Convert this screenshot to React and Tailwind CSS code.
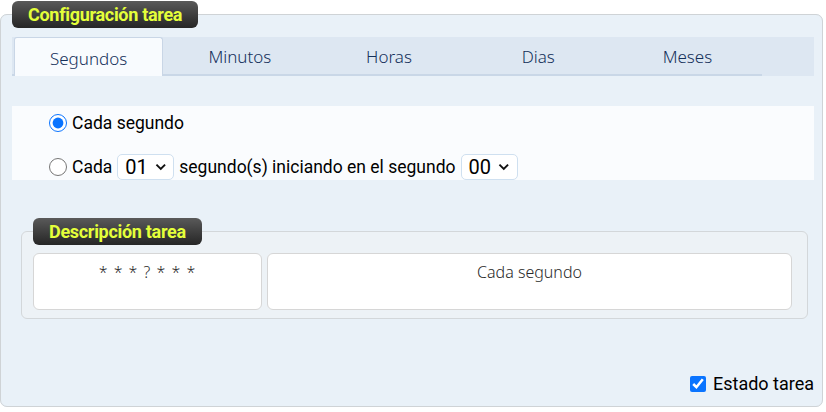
import React, { useState } from "react";

const tabs = ["Segundos", "Minutos", "Horas", "Dias", "Meses"];

const badge =
  "rounded-[6px] bg-gradient-to-b from-[#5a5a5a] to-[#262626] text-[#e4ff3a] font-bold text-[18px] leading-[27px] h-[27px] px-[16px] tracking-[-0.3px]";

const Select = ({ value }) => (
  <span className="inline-flex items-center gap-[7px] h-[26px] w-[57px] px-[7px] rounded-[5px] border border-[#cfe0f0] bg-white text-[20px] text-black">
    {value}
    <svg width="12" height="8" viewBox="0 0 12 8" fill="none">
      <path d="M1.5 1.5 6 6l4.5-4.5" stroke="#111" strokeWidth="2" />
    </svg>
  </span>
);

export default function App() {
  const [tab, setTab] = useState(0);
  const [mode, setMode] = useState("cada");
  const [estado, setEstado] = useState(true);

  return (
    <div className="w-[826px] h-[412px] bg-white pt-[1px]" style={{ fontFamily: "Roboto, sans-serif" }}>
      {/* Configuración tarea */}
      <fieldset className="w-[823px] h-[406px] border border-[#cfd3d6] rounded-[7px] bg-[#e9f1f8] px-[11px] pr-[8px] flex flex-col">
        <legend className={badge} style={{ fontFamily: "Roboto, sans-serif" }}>
          Configuración tarea
        </legend>

        {/* Tabs */}
        <div className="mt-[9px] h-[39px] bg-[#dde7f2] flex">
          <div className="flex w-[750px] border-b-2 border-[#c9d7e7]">
            {tabs.map((t, i) => (
              <button
                key={t}
                onClick={() => setTab(i)}
                className={
                  "w-[150px] pt-[3px] text-[17px] text-[#14305a] " +
                  (i === tab
                    ? "bg-[#f8fbfe] border border-[#c9d6e6] border-b-0 rounded-t-[3px] mb-[-2px] ml-[2px] w-[146px] mr-[2px]"
                    : "")
                }
                style={{ fontFamily: "'Noto Sans', sans-serif", fontWeight: 300 }}
              >
                {t}
              </button>
            ))}
          </div>
        </div>

        {/* Opciones */}
        <div className="mt-[30px] h-[74px] bg-[#fafcfe] pl-[37px] pt-[8px] flex flex-col gap-[22px] text-[17.5px] text-black">
          <label className="flex items-center gap-[5px] h-[18px]">
            <input
              type="radio"
              name="modo"
              checked={mode === "cada"}
              onChange={() => setMode("cada")}
              className="w-[18px] h-[18px] m-0 accent-[#0a74ff]"
            />
            Cada segundo
          </label>
          <label className="flex items-center gap-[5px] h-[26px]">
            <input
              type="radio"
              name="modo"
              checked={mode === "rango"}
              onChange={() => setMode("rango")}
              className="w-[18px] h-[18px] m-0 accent-[#0a74ff]"
            />
            Cada
            <Select value="01" />
            segundo(s) iniciando en el segundo
            <Select value="00" />
          </label>
        </div>

        {/* Descripción tarea */}
        <fieldset className="mt-[38px] ml-[9px] mr-[6px] border border-[#d3d7da] rounded-[6px] bg-[#edf2f6] pl-[11px] pr-[15px] pb-[8px]">
          <legend className={badge} style={{ fontFamily: "Roboto, sans-serif" }}>
            Descripción tarea
          </legend>
          <div className="mt-[8px] flex gap-[5px] h-[57px] text-[16px] text-[#2a2a2a]" style={{ fontFamily: "'Noto Sans', sans-serif", fontWeight: 300 }}>
            <div className="w-[229px] bg-white border border-[#d6d6d6] rounded-[6px] text-center pt-[6px] tracking-[1px]">
              * * * ? * * *
            </div>
            <div className="flex-1 bg-white border border-[#d6d6d6] rounded-[6px] text-center pt-[6px]">
              Cada segundo
            </div>
          </div>
        </fieldset>

        {/* Estado */}
        <div className="mt-auto mb-[9px] flex justify-end">
          <label className="flex items-center gap-[7px] text-[18px] text-black">
            <input
              type="checkbox"
              checked={estado}
              onChange={(e) => setEstado(e.target.checked)}
              className="w-[16px] h-[16px] m-0 accent-[#0a74ff]"
            />
            Estado tarea
          </label>
        </div>
      </fieldset>
    </div>
  );
}
